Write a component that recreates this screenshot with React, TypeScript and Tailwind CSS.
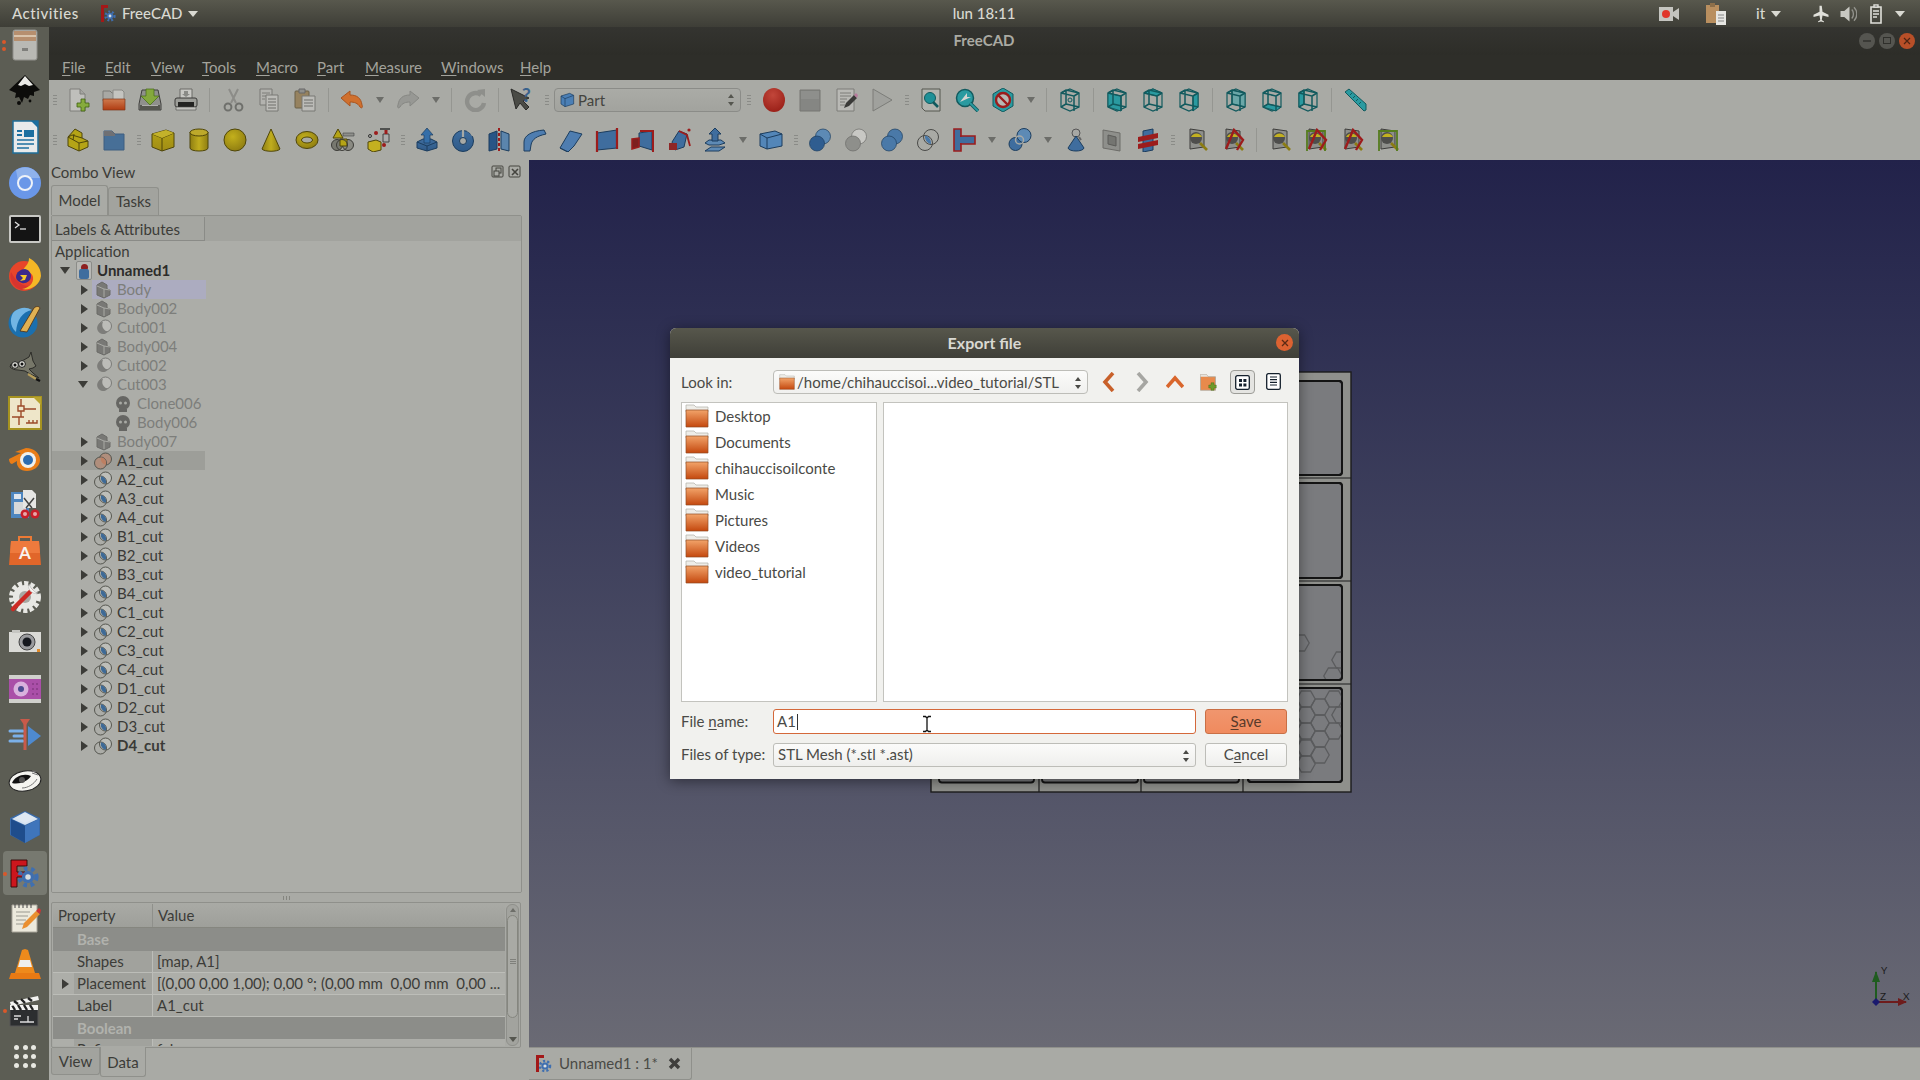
import React from 'react';

type P = { children?: React.ReactNode; s?: number };
const I = ({ children, s = 24 }: P) => (
  <svg width={s} height={s} viewBox="0 0 24 24" className="block shrink-0">{children}</svg>
);
const Gear = ({ x, y, r, c = '#3f6fb0' }: { x: number; y: number; r: number; c?: string }) => (
  <g>
    <circle cx={x} cy={y} r={r} fill="none" stroke={c} strokeWidth={r * 0.5} strokeDasharray={`${r * 0.42} ${r * 0.42}`} />
    <circle cx={x} cy={y} r={r * 0.72} fill={c} />
    <circle cx={x} cy={y} r={r * 0.32} fill="#d8dde0" />
  </g>
);
const G = 'url(#gold)', GD = '#4f460a', B1 = 'url(#blue)', BD = '#1c3d5e', T = '#2a9aa0', TD = '#125a5e', R = '#9c1c1c';

const Defs = () => (
  <svg width="0" height="0" className="absolute">
    <defs>
      <linearGradient id="gold" x1="0" y1="0" x2="0" y2="1">
        <stop offset="0" stopColor="#b5a416" />
        <stop offset="1" stopColor="#a08c14" />
      </linearGradient>
      <radialGradient id="goldr" cx=".4" cy=".35" r=".75">
        <stop offset="0" stopColor="#c3b01c" />
        <stop offset="1" stopColor="#8a7810" />
      </radialGradient>
      <linearGradient id="goldh" x1="0" y1="0" x2="1" y2="0">
        <stop offset="0" stopColor="#8f7e12" />
        <stop offset=".5" stopColor="#c0ad1e" />
        <stop offset="1" stopColor="#8f7e12" />
      </linearGradient>
      <linearGradient id="blue" x1="0" y1="0" x2="0" y2="1">
        <stop offset="0" stopColor="#3f6d9e" />
        <stop offset="1" stopColor="#2f5a88" />
      </linearGradient>
      <radialGradient id="recg" cx=".45" cy=".3" r=".75">
        <stop offset="0" stopColor="#c2463a" />
        <stop offset="1" stopColor="#981e16" />
      </radialGradient>
      <linearGradient id="openg" x1="0" y1="0" x2="0" y2="1">
        <stop offset="0" stopColor="#cf7a4e" />
        <stop offset="1" stopColor="#b03c12" />
      </linearGradient>
    </defs>
  </svg>
);

const TI: Record<string, React.ReactNode> = {
  new: <><path d="M4 1h10l5 5v17H4z" fill="#bfbfbb" stroke="#7e7e7a" /><path d="M14 1v5h5" fill="#a5a5a1" stroke="#7e7e7a" /><path d="M15 11v4h-4v4h4v4h4v-4h4v-4h-4v-4z" fill="#86ab3c" stroke="#3f6212" strokeWidth=".8" /></>,
  open: <><path d="M1 3h7l2 2h2v8H1z" fill="#a8a8a4" stroke="#7b7b77" /><path d="M11 2h9l2 2v9H11z" fill="#c4c4c0" stroke="#8a8a86" /><path d="M1 11h22v11H1z" fill="url(#openg)" stroke="#80361a" strokeWidth=".7" /></>,
  save: <><path d="M4 2h16l3 14v6H1v-6z" fill="#8f908c" stroke="#3e3e3c" /><path d="M2 17h20v5H2z" fill="#55564f" /><path d="M4 17h16v1H4z" fill="#adaea9" /><path d="M8 1h8v7h5l-9 9-9-9h5z" fill="#84a83c" stroke="#426c16" strokeWidth=".7" /></>,
  print: <><path d="M6 1h12v10H6z" fill="#c8c8c4" stroke="#6a6a66" /><path d="M10 3h4v3h2l-4 3-4-3h2z" fill="#8a8b87" /><rect x="1" y="10" width="22" height="9" rx="2" fill="#9c9d98" stroke="#3a3a38" /><path d="M4 14h16v5H4z" fill="#232321" /><path d="M2 19h20v3H2z" fill="#c2c2be" stroke="#4a4a48" strokeWidth=".6" /></>,
  cut: <><path d="M8 1l7 14M17 1l-7 14" stroke="#8c8c88" strokeWidth="2" fill="none" /><ellipse cx="7" cy="19" rx="3.400" ry="3.600" fill="none" stroke="#6f706c" strokeWidth="2" /><ellipse cx="18" cy="19" rx="3.400" ry="3.600" fill="none" stroke="#6f706c" strokeWidth="2" /></>,
  copy: <><path d="M3 1h12v16H3z" fill="#b3b3af" stroke="#797975" /><path d="M5 5h8M5 8h8M5 11h3" stroke="#7c7c78" /><path d="M9 7h12v16H9z" fill="#bcbcb8" stroke="#797975" /><path d="M11 11h8M11 14h8M11 17h8M11 20h8" stroke="#6e6e6a" /></>,
  paste: <><rect x="2" y="3" width="14" height="17" rx="1" fill="#96825f" stroke="#6b6048" /><path d="M6 1h6v4H6z" fill="#8f8f8b" stroke="#666" /><path d="M9 8h13v15H9z" fill="#bcbcb8" stroke="#797975" /><path d="M11 12h9M11 15h9M11 18h9" stroke="#6e6e6a" /></>,
  undo: <path d="M10 3L1 10l9 8v-4c4 0 8 1 10 5 2 2 3 0 2-2-1-7-5-10-12-10z" fill="#d0702e" stroke="#a85420" strokeLinejoin="round" />,
  redo: <path d="M14 3l9 7-9 8v-4c-4 0-8 1-10 5-2 2-3 0-2-2 1-7 5-10 12-10z" fill="#979894" stroke="#868783" strokeLinejoin="round" />,
  refresh: <><path d="M18 7a8.500 8.500 0 1 0 3 8" fill="none" stroke="#8e8f8b" strokeWidth="4.400" /><path d="M14 2l8-1v8z" fill="#8e8f8b" /></>,
  what: <><path d="M1 1l5 20 4-6 6 7 3-3-6-6 6-3z" fill="#4a4b46" stroke="#2a2a28" /><text x="12" y="14" fontSize="19" fill="#39618c" fontWeight="700" fontFamily="Lato">?</text></>,
  rec: <ellipse cx="12" cy="12" rx="11" ry="12" fill="url(#recg)" />,
  stop: <><path d="M2 2h20v21H2z" fill="#858683" stroke="#767773" /><path d="M3 3h18v8H3z" fill="#8e8f8c" /></>,
  macro: <><path d="M3 1h17v22H3z" fill="#b9b9b5" stroke="#7d7d79" /><path d="M6 5h11M6 8h11M6 11h7M6 14h5M6 17h5" stroke="#7d7d79" /><path d="M10 20l2-5 8-8 3 3-8 8z" fill="#3a3a38" /><path d="M20 7l3 3 1-3-2-2z" fill="#b57a9b" /></>,
  play: <path d="M3 1l19 11L3 23z" fill="#a0a19d" stroke="#7c7d79" />,
  fitall: <><path d="M3 1h18v22H6l-3-3z" fill="#b3b4af" stroke="#55564f" /><circle cx="11" cy="10" r="5.500" fill="#1f9097" stroke="#125a5e" /><path d="M14 14l5 5" stroke="#125a5e" strokeWidth="2.600" /></>,
  fitsel: <><circle cx="10" cy="10" r="8.500" fill="#2a9aa0" stroke="#125a5e" strokeWidth="1.500" /><path d="M5 14l7-9v4l4 0z" fill="#d4d4d0" /><path d="M15 15l8 8" stroke="#125a5e" strokeWidth="3.600" /><path d="M15 15l8 8" stroke="#2a9aa0" strokeWidth="1.800" /></>,
  style: <><path d="M12 0l10 6v12l-10 6-10-6V6z" fill="#2a9aa0" stroke="#125a5e" /><circle cx="12" cy="12" r="7" fill="#b8b8b4" stroke={R} strokeWidth="2.400" /><path d="M7 7l10 10" stroke={R} strokeWidth="2.400" /></>,
};
const cube = (kind: string) => (
  <>
    <path d="M12 1l9 4v14l-9 4-9-4V5z" fill="#a9aaa5" stroke={TD} strokeWidth="1.200" />
    {kind === 'front' && <path d="M3 5l13 3v15l-13-4z" fill={T} stroke={TD} />}
    {kind === 'top' && <path d="M3 5l9-4 9 4-5 3z" fill={T} stroke={TD} />}
    {kind === 'right' && <path d="M16 8l5-3v14l-5 4z" fill={T} stroke={TD} />}
    {kind === 'rear' && <path d="M8 2l13 3v14l-13-3z" fill="#6aa7a8" stroke={TD} />}
    {kind === 'bottom' && <path d="M3 19l5-3 13 3-5 4z" fill={T} stroke={TD} />}
    {kind === 'left' && <path d="M3 5l5-3v14l-5 3z" fill={T} stroke={TD} />}
    <path d="M3 5l13 3v15M16 8l5-3M8 2v14l-5 3M8 16l13 3M3 5l5-3 13 3" fill="none" stroke={TD} strokeWidth="1.500" />
    {kind === 'iso' && <circle cx="12" cy="12" r="2" fill="none" stroke={TD} />}
  </>
);
const Cube = ({ k }: { k: string }) => <I>{cube(k)}</I>;
const Circles = ({ a, b, st = BD }: { a: string; b: string; st?: string }) => (
  <>
    <circle cx="15" cy="8.500" r="7.500" fill={b} stroke={st} strokeWidth=".7" />
    <circle cx="9" cy="15.500" r="7.500" fill={a} stroke={st} strokeWidth=".7" />
  </>
);
const Meas = ({ frame, v }: { frame?: boolean; v?: boolean }) => (
  <I>
    <path d="M5 1l14 2v16L5 21z" fill="#8e8f8b" stroke="#3d3d3b" />
    <circle cx="11" cy="10" r="6" fill="#4e4e4c" />
    <path d="M6 9a6 6 0 0 1 11 0z" fill="#c2b020" />
    <path d="M15 15l7 7" stroke="#8b7c12" strokeWidth="2.600" />
    {frame && <path d="M3 23V3h18v20" fill="none" stroke="#557c1e" strokeWidth="1.800" />}
    {v && <path d="M5 21L13 2l9 10-6 10" fill="none" stroke={R} strokeWidth="2.400" />}
  </I>
);

const T2: Record<string, React.ReactNode> = {
  pd: <><path d="M9 1l7 4v5l6 3v6l-9 4-11-5V9z" fill="#b5a416" stroke={GD} /><path d="M2 9l4-2 10 3M2 9l11 6 9-2M13 15v8M8 6l-1 6" fill="none" stroke={GD} /></>,
  fold: <><path d="M2 3h8l3 3h9v16H2z" fill="#476f97" stroke="#3f5f80" /><path d="M2 3h8l3 3 0 2H2z" fill="#6f7074" /></>,
  box: <><path d="M1 6l14-4 8 3v14l-12 4-10-4z" fill={G} stroke={GD} /><path d="M1 6l10 4 12-5M11 10v13" fill="none" stroke={GD} /><path d="M1 6l14-4 8 3-12 5z" fill="#c3b22a" /></>,
  cyl: <><path d="M3 4v16c0 4 18 4 18 0V4z" fill="url(#goldh)" stroke={GD} /><ellipse cx="12" cy="4.500" rx="9" ry="3.500" fill="#bda92a" stroke={GD} /></>,
  sph: <circle cx="12" cy="12" r="11" fill="url(#goldr)" stroke={GD} />,
  cone: <path d="M12 1L3 21c2 3 16 3 18 0z" fill="url(#goldh)" stroke={GD} />,
  tor: <><ellipse cx="12" cy="12" rx="11" ry="8.500" fill="url(#goldr)" stroke={GD} /><ellipse cx="12" cy="12" rx="5.500" ry="3" fill="#a9aaa5" stroke={GD} /></>,
  prim: <><path d="M7 1l5 9H2z" fill="#b5a416" stroke={GD} /><path d="M12 5h11v3H12z" fill="#8e8f8b" stroke="#444" strokeWidth=".6" /><circle cx="6" cy="17" r="5.500" fill="#77786f" stroke="#3c3c38" /><circle cx="17" cy="17" r="5.500" fill="#8a8a82" stroke="#3c3c38" /><path d="M9 11h7v7H9z" fill="#b5a416" stroke={GD} /><circle cx="11" cy="17" r="5.500" fill="none" stroke="#3c3c38" /></>,
  build: <><path d="M1 14l8-2 5 2v8l-8 2-5-3z" fill="#c4b020" stroke={GD} /><path d="M16 6h6v8h-6z" fill="#aaa" stroke="#444" /><path d="M13 1h10" stroke="#333" strokeWidth="1.500" /><path d="M19 2v4" stroke={R} strokeWidth="3" /><circle cx="9" cy="5" r="2" fill={R} /><circle cx="3" cy="8" r="1.500" fill="none" stroke="#333" /><circle cx="17" cy="17" r="2" fill={R} /></>,
  ext: <><path d="M2 14l6-3h8l6 3v6l-10 3-10-3z" fill={B1} stroke={BD} /><path d="M2 14l10 4 10-4M12 18v5" fill="none" stroke={BD} /><path d="M12 0l6 7h-3v8H9V7H6z" fill="#346ea8" stroke={BD} strokeWidth=".7" /></>,
  rev: <><circle cx="12" cy="13" r="10.500" fill={B1} stroke={BD} /><circle cx="12" cy="13" r="3.500" fill="#a9aaa5" stroke={BD} /><path d="M12 2v7M16 2a10 10 0 0 1 6 6" fill="none" stroke="#a9aaa5" strokeWidth="2.200" /></>,
  mir: <><path d="M2 6l8-3v18l-8 2z" fill="#285586" stroke={BD} /><path d="M14 3l8 3v17l-8-2z" fill="#5b85ad" stroke={BD} /><path d="M12 0v24" stroke={R} strokeWidth="2" strokeDasharray="3 2" /></>,
  fil: <path d="M1 23V14C1 8 8 3 21 2l2 4C14 8 9 11 8 17l-1 6z" fill="#4e7db0" stroke={BD} />,
  cham: <><path d="M1 20L11 3l12 3-8 12-6 6z" fill="#4e7db0" stroke={BD} /><path d="M1 20l8 4" stroke={BD} /></>,
  ruled: <><path d="M2 5l20-3v18L2 22z" fill="#3f6d9e" stroke={BD} /><path d="M2 3v21M22 0v21" stroke={R} strokeWidth="2.200" /></>,
  loft: <><path d="M8 5l13-2v19l-13-4z" fill="#3f6d9e" stroke={BD} /><path d="M9 3h13v21" fill="none" stroke={R} strokeWidth="2" /><path d="M1 11l7-1v9l-7 2z" fill="#7c2020" stroke={R} strokeWidth="1.500" /></>,
  sweep: <><path d="M5 14L12 3l8 3-3 13-9 3z" fill="#3f6d9e" stroke={BD} /><path d="M2 15h8v7H2z" fill="#8e2626" /><circle cx="22" cy="2" r="1.600" fill={R} /><path d="M12 3l8 4 3 11" fill="none" stroke={R} strokeWidth="1.800" /></>,
  off: <><path d="M2 23l6-4h14l-6 4z" fill="#5e8ab5" stroke={BD} /><path d="M2 15l4-3h12l4 3-6 2H6z" fill="#5e8ab5" stroke={BD} /><path d="M12 0l6 6h-3v7H9V6H6z" fill="#3f6d9e" stroke={BD} /></>,
  thick: <><path d="M1 6l15-3 7 3v12l-15 3-7-3z" fill="#5386b8" stroke={BD} /><path d="M1 6l7 4 15-4M8 10v11" fill="none" stroke={BD} /></>,
  bool: <Circles a="#2f5d90" b="#5d8ab5" />,
  bcut: <Circles a="#8e8f8b" b="#c8c8c4" st="#6b6b68" />,
  fuse: <Circles a="#4a79a8" b="#4a79a8" />,
  com: <><circle cx="15" cy="9" r="7.500" fill="none" stroke="#4a4a48" /><circle cx="9" cy="15" r="7.500" fill="none" stroke="#4a4a48" /><path d="M9 7.600a7.500 7.500 0 0 1 6 8.600 7.500 7.500 0 0 1-6-8.600z" fill="#4a79a8" /></>,
  join: <><path d="M2 1h7v22H2z" fill="#3f6d9e" stroke={R} strokeWidth="1.600" /><path d="M9 8h14v8H9z" fill="#3f6d9e" stroke={R} strokeWidth="1.600" /><path d="M8 9h2v6H8z" fill="#3f6d9e" /></>,
  split: <><circle cx="7.500" cy="16" r="6.500" fill="#3f6d9e" stroke={BD} /><circle cx="16" cy="7.500" r="7" fill="#5d8ab5" stroke={BD} /><circle cx="11.500" cy="12" r="4" fill="none" stroke="#a9aaa5" strokeWidth="1.500" /></>,
  comp: <><circle cx="12" cy="5" r="4" fill="#a8a8a4" stroke="#555" /><path d="M12 8l-8 12c1 4 15 4 16 0z" fill="#3f6d9e" stroke={BD} /><path d="M15 9l2 3" stroke="#666" strokeWidth="2" /></>,
  shape: <><path d="M3 2l17 3v18L3 20z" fill="#8e8f8b" stroke="#6c6c68" /><path d="M8 7l8 2v9l-8-2z" fill="#747571" stroke="#5b5b58" /></>,
  xor: <><path d="M7 3l10-2v21l-10 2z" fill="#3f6d9e" stroke={BD} /><path d="M2 9l20-4v5L2 14zM2 16l20-4v5L2 21z" fill={R} /></>,
  m1: <Meas />,
  m2: <Meas v />,
  m3: <Meas />,
  m4: <Meas frame v />,
  m5: <Meas v />,
  m6: <Meas frame />,
};

const Btn = ({ n, c }: { n?: string; c?: React.ReactNode }) => (
  <div className="w-[36px] h-[28px] shrink-0 flex items-center justify-center">
    {c ?? <I>{(n && TI[n]) || (n && T2[n])}</I>}
  </div>
);
const Dd = () => (
  <div className="w-[20px] h-[28px] shrink-0 flex items-center justify-center">
    <div className="w-0 h-0 border-l-[4px] border-r-[4px] border-t-[6px] border-l-transparent border-r-transparent border-t-[#6c6d69]" />
  </div>
);
const Handle = ({ w }: { w: string }) => (
  <div className={`${w} h-[28px] shrink-0 flex flex-col items-center justify-center gap-[2px]`}>
    <div className="w-[4px] h-px bg-[#8a8b87]" />
    <div className="w-[4px] h-px bg-[#8a8b87]" />
    <div className="w-[4px] h-px bg-[#8a8b87]" />
    <div className="w-[4px] h-px bg-[#8a8b87]" />
  </div>
);
const Sep = () => (
  <div className="w-[11px] h-[28px] shrink-0 flex items-center justify-center">
    <div className="w-px h-[24px] bg-[#959691]" />
  </div>
);

const Caret = () => (
  <div className="w-0 h-0 border-l-[5px] border-r-[5px] border-t-[6px] border-l-transparent border-r-transparent border-t-[#d9d9d2]" />
);

const TopBar = () => (
  <div className="h-[27px] shrink-0 bg-linear-to-b from-[#58584d] to-[#3e3e37] relative flex items-center text-[#d9d9d2] text-[15px] font-medium">
    <span className="ml-[12px] w-[86px] tracking-[0.55px]">Activities</span>
    <svg width="16" height="20" viewBox="0 0 16 20" className="ml-[2px]">
      <path d="M1 1h7v3H4v14H1z" fill="#a31818" />
      <Gear x={10} y={12} r={4.500} />
    </svg>
    <span className="ml-[6px]">FreeCAD</span>
    <div className="ml-[5px]"><Caret /></div>
    <div className="flex-1" />
    <div className="flex items-center pr-[15px]">
      <svg width="20" height="16" viewBox="0 0 20 16"><path d="M0 1h14v14H0z" fill="#c5c5c0" /><circle cx="7" cy="8" r="4" fill="#e0362a" /><path d="M14 6l6-4v12l-6-4z" fill="#c5c5c0" /></svg>
      <svg width="22" height="24" viewBox="0 0 22 24" className="ml-[26px]"><path d="M1 3h13v18H1z" fill="#b98f5f" /><path d="M5 1h5v4H5z" fill="#8d6f4a" /><path d="M11 9h10v14H11z" fill="#e6e6e2" /><path d="M13 13h6M13 16h6M13 19h6" stroke="#888" /></svg>
      <span className="ml-[29px] w-[15px]">it</span>
      <Caret />
      <svg width="18" height="18" viewBox="0 0 24 24" className="ml-[31px]"><path d="M10 1h3l1 8 8 4v3l-8-2-1 6 3 2v1l-4-1-4 1v-1l3-2-1-6-8 2v-3l8-4z" fill="#e0e0da" /></svg>
      <svg width="18" height="18" viewBox="0 0 24 24" className="ml-[9px]"><path d="M2 8h5l7-6v20l-7-6H2z" fill="#c8c8c2" /><path d="M17 6c3 3 3 9 0 12M20 3c5 5 5 13 0 18" fill="none" stroke="#93938d" strokeWidth="1.800" /></svg>
      <svg width="16" height="20" viewBox="0 0 16 20" className="ml-[12px]"><path d="M2 3h10v16H2z" fill="none" stroke="#e0e0da" strokeWidth="1.600" /><path d="M5 1h4v2H5zM4 7h6M4 10h6M4 13h4" stroke="#e0e0da" strokeWidth="1.400" /></svg>
      <div className="ml-[10px]"><Caret /></div>
    </div>
    <span className="absolute left-[948px] w-[72px] text-center">lun 18:11</span>
  </div>
);

const DockSvg = ({ children }: P) => (
  <div className="h-[46px] w-[49px] flex items-center justify-center shrink-0">
    <svg width="34" height="34" viewBox="0 0 34 34">{children}</svg>
  </div>
);
const dockIcons: React.ReactNode[] = [
  <><rect x="5" y="2" width="24" height="30" rx="2" fill="#b9b9b4" stroke="#8f8f8a" /><path d="M6 3h22v10H6z" fill="#b68f6f" /><path d="M6 7h22v2H6z" fill="#d9c4ac" /><path d="M14 20h6v3h-6z" fill="#7f7f7b" /></>,
  <><path d="M17 1l15 15-6 2v4l-4-1-2 4-4-2-2 6-3-6-4 1 1-5-7-3z" fill="#0c0c0a" /><path d="M17 2l8 9-4 1-4-2-4 2-3-1z" fill="#eaeae6" /><circle cx="11" cy="29" r="2" fill="#0c0c0a" /><circle cx="22" cy="27" r="1.400" fill="#0c0c0a" /></>,
  <><path d="M5 1h25v32H5z" fill="#e8eaeb" stroke="#1f6d98" strokeWidth="1.500" /><path d="M23 1h7v7z" fill="#1c6fa0" /><path d="M9 10h5v2H9zM9 14h5v2H9z" fill="#1c6fa0" /><path d="M16 10h10v7H16z" fill="#1c6fa0" /><path d="M9 20h17M9 24h17M9 28h12" stroke="#1c6fa0" strokeWidth="1.700" /></>,
  <><circle cx="17" cy="17" r="16" fill="#6a97e8" /><path d="M8 4a16 16 0 0 1 24 8H17a7 7 0 0 0-7 3z" fill="#8fb2ec" /><circle cx="17" cy="17" r="7" fill="#6a97e8" stroke="#eef2f8" strokeWidth="2" /></>,
  <><rect x="2" y="4" width="30" height="26" rx="1" fill="#141414" stroke="#c8c8c4" strokeWidth="2" /><path d="M7 10l4 3-4 3" fill="none" stroke="#ddd" strokeWidth="1.300" /><path d="M12 17h6" stroke="#ddd" strokeWidth="1.300" /></>,
  <><circle cx="16" cy="18" r="15" fill="#e8452a" /><path d="M3 14a14 14 0 0 0 13 18c6 0 11-3 14-8-5 5-18 8-27-10z" fill="#d8342f" /><path d="M21 0c6 3 12 9 12 18-1 9-11 15-19 13 7-1 12-6 11-12-1-5-7-6-10-4 0-7 6-7 6-15z" fill="#f5b726" /><path d="M8 19c0-5 5-8 9-8 4 1 6 4 6 7 0 5-5 8-9 7-3-1-6-3-6-6z" fill="#3b2a8c" /><path d="M12 17h7l-2 5-5 1 3-3z" fill="#f6c92b" /></>,
  <><circle cx="15" cy="19" r="14.500" fill="#1b6fae" /><path d="M5 9a15 15 0 0 1 19-3C14 8 9 16 8 28 3 24 1 16 5 9z" fill="#72b5e4" /><path d="M12 27L26 4c2-2 5-2 6 0l-13 24z" fill="#e0b052" stroke="#4c2f12" strokeWidth=".8" /></>,
  <><path d="M9 13l5-2 7-4 2-5 2 9 3 5-3 2-4 1 4 4 6 5-9-4-5-3-7-1c-3 0-6-1-8-3l1-3z" fill="#777769" stroke="#2c2c28" strokeWidth="1" /><circle cx="7" cy="15" r="3.400" fill="#dcdcd6" stroke="#1c1c1a" /><circle cx="14" cy="14" r="3.400" fill="#dcdcd6" stroke="#1c1c1a" /><circle cx="7" cy="15" r="1.500" fill="#111" /><circle cx="14" cy="14" r="1.500" fill="#111" /><path d="M20 24l8 5" stroke="#b59c5a" strokeWidth="2.200" /><path d="M28 29l4 2" stroke="#111" strokeWidth="2.400" /></>,
  <><path d="M1 1h32v32H1z" fill="#eee6c9" stroke="#a69320" strokeWidth="2" /><path d="M25 1h8v8z" fill="#b8a42e" /><path d="M7 21h9M13 3v7M13 15v6M10 10h6v5h-6zM16 13h12M11 21v8M4 21h4M18 27h11v-3M21 24v3M25 24v3" fill="none" stroke="#9c4a28" strokeWidth="1.400" /></>,
  <><path d="M1 17l12-6-6-1 11-4c8 0 14 5 14 12 0 7-7 11-13 11-7 0-11-5-10-10l-5 3c-2 0-3-3-3-5z" fill="#ea7d16" /><circle cx="20" cy="18" r="8" fill="#f0f0ec" /><circle cx="20" cy="18" r="5" fill="#2c6cb0" /></>,
  <><path d="M3 4h18v26H3z" fill="#4e86bf" /><path d="M6 6h7v5H6z" fill="#dfe6ee" /><path d="M6 14h12v12H6z" fill="#d6d8da" /><path d="M15 2h9l4 4v14H15z" fill="#e6e6e4" /><path d="M16 10l8 10M26 10l-8 10" stroke="#444" strokeWidth="1.500" /><circle cx="17" cy="26" r="4.500" fill="#c81f2a" /><circle cx="27" cy="26" r="4.500" fill="#c81f2a" /><circle cx="17" cy="26" r="2" fill="#e9a7a8" /><circle cx="27" cy="26" r="2" fill="#e9a7a8" /></>,
  <><path d="M11 7V3h12v4" fill="none" stroke="#ed7a35" strokeWidth="2" /><path d="M3 7h28l2 24H1z" fill="#e1662a" /><path d="M3 7h28l1 12H2z" fill="#ee7a3d" /><text x="17" y="25" textAnchor="middle" fontSize="17" fontWeight="700" fill="#f8f4ee" fontFamily="Lato">A</text></>,
  <><circle cx="17" cy="17" r="13" fill="none" stroke="#e8e8e4" strokeWidth="6" strokeDasharray="4 2" /><circle cx="17" cy="17" r="12" fill="#e8e8e4" /><circle cx="17" cy="17" r="6" fill="#a8a8a2" /><path d="M5 29L23 11" stroke="#cc2a24" strokeWidth="4.500" strokeLinecap="round" /><path d="M21 4a7 7 0 0 0 9 9l-3-1-4-4z" fill="#f4f4f0" stroke="#aaa" strokeWidth=".5" /></>,
  <><path d="M1 6h32v20H1z" fill="#dadad6" /><path d="M4 4h8v3H4z" fill="#c6c6c2" /><circle cx="19" cy="16" r="8" fill="#9a9b9e" stroke="#444" /><circle cx="19" cy="16" r="4.500" fill="#15181e" /><path d="M29 23h3v3h-3z" fill="#e08a2a" /></>,
  <><path d="M1 3h32v28H1z" fill="#aa4fa8" /><path d="M1 3h32v4H1zM1 27h32v4H1z" fill="#d0d0cc" /><circle cx="13" cy="17" r="7.500" fill="#d9b1dd" /><circle cx="13" cy="17" r="3" fill="#4b4b90" /><path d="M24 11h2v2h-2zM28 11h2v2h-2zM24 16h2v2h-2zM28 16h2v2h-2zM24 21h2v2h-2zM28 21h2v2h-2z" fill="#8f3f8e" /></>,
  <><path d="M2 13h13M6 18h9M2 23h13" stroke="#7bb0e8" strokeWidth="3" strokeLinecap="round" /><path d="M17 5v27" stroke="#c85a4a" strokeWidth="3" /><path d="M12 1h10l-4 6h-2z" fill="#c85a4a" /><path d="M20 8l13 10-13 10z" fill="#4e8ad0" /></>,
  <><ellipse cx="17" cy="17" rx="16" ry="10" fill="#f4f4f0" stroke="#222" transform="rotate(-10 17 17)" /><path d="M4 19c3-7 12-10 19-7-3 5-12 9-19 7z" fill="#111" /><circle cx="14" cy="16" r="3" fill="#555" /><path d="M14 24c6 0 12-4 15-9M24 9l6 2M24 7l4 1" fill="none" stroke="#777" /></>,
  <><path d="M17 1l15 7v17l-15 8-15-8V8z" fill="#3a6aa8" /><path d="M17 2l13 7-13 6-13-6z" fill="#d6e3f2" /><path d="M7 8l10-5 10 5-10 5z" fill="#dfe8f3" /><path d="M3 9l14 7v17L3 25z" fill="#1f4d8c" /><path d="M17 16l14-7v16l-14 8z" fill="#3f75bb" /></>,
  null,
  <><path d="M4 3h25v27H4z" fill="#ece9dc" stroke="#a8a59a" /><path d="M7 2v4M11 2v4M15 2v4M19 2v4M23 2v4" stroke="#444" /><path d="M8 10h14M8 14h12M8 18h10M8 22h8" stroke="#9a9990" /><path d="M14 27l2-6 12-12 4 3-13 13z" fill="#ea8f2f" /><path d="M28 9l3-3 2 2-1 4z" fill="#c33" /></>,
  <><path d="M17 1l3 1 7 23H7l7-23z" fill="#ee8a1c" /><path d="M12 12h10l2 7H10z" fill="#eee" /><path d="M3 25h28l2 6H1z" fill="#e87a14" /></>,
  <><path d="M2 15h28v17H2z" fill="#2c2e30" stroke="#555" /><path d="M2 11h28v5H2z" fill="#f2f2f0" /><path d="M4 11l3 5M10 11l3 5M16 11l3 5M22 11l3 5" stroke="#222" strokeWidth="2.400" /><path d="M2 8l28-6 1 4-28 6z" fill="#f2f2f0" /><path d="M6 7l4 3M13 5l4 4M20 4l4 3" stroke="#222" strokeWidth="2.400" /><path d="M6 22h7M6 25h4M12 28h14M20 22v6" stroke="#ddd" strokeWidth="1.300" /></>,
];

const FreeCadLogo = () => (
  <svg width="34" height="36" viewBox="0 0 34 36">
    <path d="M3 5h16v6H9v6h8v5H9v10H3z" fill="#cc161d" stroke="#300808" strokeWidth=".9" />
    <Gear x={20} y={22} r={8.500} />
  </svg>
);

const Dock = () => (
  <div className="w-[49px] shrink-0 bg-[#5c5d54] flex flex-col relative">
    <div className="-mt-[5px]" />
    {dockIcons.map((ic, i) =>
      ic === null ? (
        <div key={i} className="h-[46px] w-[49px] flex items-center justify-center shrink-0 relative">
          <div className="w-[44px] h-[44px] rounded-[4px] bg-[#777970] flex items-center justify-center">
            <FreeCadLogo />
          </div>
          <div className="absolute left-[3px] top-[22px] w-[4px] h-[4px] rounded-full bg-[#d9582a]" />
        </div>
      ) : (
        <div key={i} className="relative">
          <DockSvg>{ic}</DockSvg>
          {i === 0 && (
            <>
              <div className="absolute left-[2px] top-[18px] w-[4px] h-[4px] rounded-full bg-[#d9582a]" />
              <div className="absolute left-[2px] top-[25px] w-[4px] h-[4px] rounded-full bg-[#d9582a]" />
            </>
          )}
          {i === 21 && <div className="absolute left-[3px] top-[21px] w-[4px] h-[4px] rounded-full bg-[#d9582a]" />}
        </div>
      ),
    )}
    <div className="h-[46px] w-[49px] grid grid-cols-3 gap-x-[5px] gap-y-[4px] px-[14px] pt-[11px] content-start">
      {[0, 1, 2, 3, 4, 5, 6, 7, 8].map((k) => (
        <div key={k} className="w-[5px] h-[5px] rounded-full bg-[#e8e8e2]" />
      ))}
    </div>
  </div>
);

const menus: [string, string, string][] = [
  ['F', 'ile', 'w-[43px]'],
  ['E', 'dit', 'w-[46px]'],
  ['V', 'iew', 'w-[51px]'],
  ['T', 'ools', 'w-[54px]'],
  ['M', 'acro', 'w-[61px]'],
  ['P', 'art', 'w-[48px]'],
  ['M', 'easure', 'w-[76px]'],
  ['W', 'indows', 'w-[79px]'],
  ['H', 'elp', 'w-[50px]'],
];

const Toolbars = () => (
  <div className="h-[80px] shrink-0 bg-[#a9aaa5] flex flex-col">
    <div className="flex items-center h-[40px]">
      <Handle w="w-[11px]" />
      <Btn n="new" /><Btn n="open" /><Btn n="save" /><Btn n="print" />
      <Sep />
      <Btn n="cut" /><Btn n="copy" /><Btn n="paste" />
      <Sep />
      <Btn n="undo" /><Dd /><Btn n="redo" /><Dd />
      <Sep />
      <Btn n="refresh" />
      <Sep />
      <Btn n="what" />
      <Handle w="w-[14px]" />
      <div className="w-[187px] h-[24px] shrink-0 rounded-[4px] border border-[#8b8c88] bg-linear-to-b from-[#aaaba6] to-[#a2a39e] flex items-center pl-[4px] text-[15px] text-[#44443f] relative">
        <svg width="16" height="16" viewBox="0 0 24 24"><path d="M3 6l13-4 6 3v13l-13 4-6-4z" fill="#4b7fb5" stroke={BD} /><path d="M3 6l6 4 13-5M9 10v12" fill="none" stroke={BD} /></svg>
        <span className="ml-[3px]">Part</span>
        <svg width="8" height="16" viewBox="0 0 8 16" className="absolute right-[5px] top-[3px]"><path d="M1 6l3-4 3 4zM1 10l3 4 3-4z" fill="#55564f" /></svg>
      </div>
      <Handle w="w-[15px]" />
      <Btn n="rec" /><Btn n="stop" /><Btn n="macro" /><Btn n="play" />
      <Handle w="w-[13px]" />
      <Btn n="fitall" /><Btn n="fitsel" /><Btn n="style" /><Dd />
      <Sep />
      <Btn c={<Cube k="iso" />} />
      <Sep />
      <Btn c={<Cube k="front" />} /><Btn c={<Cube k="top" />} /><Btn c={<Cube k="right" />} />
      <Sep />
      <Btn c={<Cube k="rear" />} /><Btn c={<Cube k="bottom" />} /><Btn c={<Cube k="left" />} />
      <Sep />
      <Btn c={<I><path d="M2 4l4-3 17 15v6l-2 1z" fill={T} stroke={TD} /><path d="M7 7l2-2M10 10l2-2M13 13l2-2M16 16l2-2" stroke={TD} /></I>} />
    </div>
    <div className="flex items-center h-[40px]">
      <Handle w="w-[11px]" />
      <Btn n="pd" /><Btn n="fold" />
      <Handle w="w-[13px]" />
      <Btn n="box" /><Btn n="cyl" /><Btn n="sph" /><Btn n="cone" /><Btn n="tor" /><Btn n="prim" /><Btn n="build" />
      <Handle w="w-[12px]" />
      <Btn n="ext" /><Btn n="rev" /><Btn n="mir" /><Btn n="fil" /><Btn n="cham" /><Btn n="ruled" /><Btn n="loft" /><Btn n="sweep" /><Btn n="off" /><Dd /><Btn n="thick" />
      <Handle w="w-[13px]" />
      <Btn n="bool" /><Btn n="bcut" /><Btn n="fuse" /><Btn n="com" /><Btn n="join" /><Dd /><Btn n="split" /><Dd /><Btn n="comp" /><Btn n="shape" /><Btn n="xor" />
      <Handle w="w-[13px]" />
      <Btn n="m1" /><Btn n="m2" />
      <Sep />
      <Btn n="m3" /><Btn n="m4" /><Btn n="m5" /><Btn n="m6" />
    </div>
  </div>
);

const BodyIc = () => (
  <svg width="18" height="18" viewBox="0 0 18 18"><path d="M8 1l5 3v4l3 1v5l-6 3-7-3V4z" fill="#787875" stroke="#6a6a67" /><path d="M3 5l7 3v8M10 8l6 1" fill="none" stroke="#a9aaa5" /></svg>
);
const CutIc = () => (
  <svg width="18" height="18" viewBox="0 0 18 18"><circle cx="11.500" cy="7" r="6" fill="#bcbcb8" stroke="#7a7a77" /><path d="M9 3a6 6 0 1 0 5 9.500 6.500 6.500 0 0 1-5-9.500z" fill="#7d7d7a" /></svg>
);
const CloneIc = () => (
  <svg width="18" height="18" viewBox="0 0 18 18"><circle cx="9" cy="8" r="7" fill="#666663" /><circle cx="6.500" cy="8" r="1.500" fill="#a9aaa5" /><circle cx="11.500" cy="8" r="1.500" fill="#a9aaa5" /><path d="M5 14h8v3H5z" fill="#666663" /></svg>
);
const BoolIc = ({ sel }: { sel?: boolean }) => (
  <svg width="18" height="18" viewBox="0 0 18 18">
    <circle cx="11.500" cy="7" r="6" fill={sel ? '#b08e7c' : '#bdbeb9'} stroke="#55564f" />
    <circle cx="6.500" cy="11" r="6" fill={sel ? '#b08e7c' : 'none'} stroke="#55564f" />
    <path d="M7 5.200a6 6 0 0 1 5 7.600 6 6 0 0 1-5-7.600z" fill={sel ? '#bd7f62' : '#3e6a96'} />
  </svg>
);
const Tri = ({ open }: { open?: boolean }) =>
  open ? (
    <div className="w-0 h-0 border-l-[5px] border-r-[5px] border-t-[7px] border-l-transparent border-r-transparent border-t-[#3c3c38]" />
  ) : (
    <div className="w-0 h-0 border-t-[5px] border-b-[5px] border-l-[7px] border-t-transparent border-b-transparent border-l-[#3c3c38]" />
  );

type Row = { t: string; ic: 'b' | 'c' | 'cl' | 'bl'; dim?: boolean; sel?: boolean; bold?: boolean; open?: boolean; child?: boolean };
const rows: Row[] = [
  { t: 'Body', ic: 'b', dim: true },
  { t: 'Body002', ic: 'b', dim: true },
  { t: 'Cut001', ic: 'c', dim: true },
  { t: 'Body004', ic: 'b', dim: true },
  { t: 'Cut002', ic: 'c', dim: true },
  { t: 'Cut003', ic: 'c', dim: true, open: true },
  { t: 'Clone006', ic: 'cl', dim: true, child: true },
  { t: 'Body006', ic: 'cl', dim: true, child: true },
  { t: 'Body007', ic: 'b', dim: true },
  { t: 'A1_cut', ic: 'bl', sel: true },
  ...['A2', 'A3', 'A4', 'B1', 'B2', 'B3', 'B4', 'C1', 'C2', 'C3', 'C4', 'D1', 'D2', 'D3'].map((k) => ({ t: k + '_cut', ic: 'bl' as const })),
  { t: 'D4_cut', ic: 'bl', bold: true },
];

const TreeRow = ({ r, i }: { r: Row; i: number }) => (
  <div className={`h-[19px] flex items-center relative ${r.sel ? 'bg-[#9d9e99] w-[153px] -ml-[1px] pl-[1px]' : ''}`}>
    {i === 0 && <div className="absolute left-[39px] top-0 w-[114px] h-[19px] bg-[#acacc0]" />}
    <div className="w-[35px] shrink-0 relative flex justify-end">
      {!r.child && <Tri open={r.open} />}
    </div>
    <div className={`${r.child ? 'ml-[26px]' : 'ml-[6px]'} w-[18px] shrink-0 relative`}>
      {r.ic === 'b' && <BodyIc />}
      {r.ic === 'c' && <CutIc />}
      {r.ic === 'cl' && <CloneIc />}
      {r.ic === 'bl' && <BoolIc sel={r.sel} />}
    </div>
    <span className={`ml-[5px] relative text-[15px] ${r.dim ? 'text-[#7d7e7b]' : 'text-[#3a3a37]'} ${r.bold ? 'font-bold' : ''}`}>{r.t}</span>
  </div>
);

const PropRow = ({ a, b, tri, light }: { a: string; b: string; tri?: boolean; light?: boolean }) => (
  <div className="h-[22px] flex border-b border-[#bcbdb8]">
    <div className={`w-[21px] shrink-0 flex items-center justify-center pl-[3px] ${light ? 'bg-[#adaea9]' : 'bg-[#a1a29d]'}`}>
      {tri && <Tri />}
    </div>
    <div className="w-[79px] shrink-0 bg-[#a1a29d] border-r border-[#bcbdb8] pl-[3px] flex items-center text-[15px] text-[#3c3c38] whitespace-pre">{a}</div>
    <div className={`flex-1 pl-[4px] flex items-center text-[15px] text-[#3c3c38] whitespace-pre overflow-hidden ${light ? 'bg-[#adaea9]' : 'bg-[#a4a5a0]'}`}>{b}</div>
  </div>
);
const PropGroup = ({ t, tall }: { t: string; tall?: boolean }) => (
  <div className={`${tall ? 'h-[23px]' : 'h-[22px]'} bg-[#8c8d89] flex items-center pl-[24px] text-[15px] font-bold text-[#b1b2ad]`}>{t}</div>
);

const LeftPanel = () => (
  <div className="w-[480px] shrink-0 bg-[#a9aaa5] flex flex-col pl-[2px] pr-[7px] text-[#3c3c38]">
    <div className="h-[25px] shrink-0 flex items-center text-[15px] relative">
      Combo View
      <svg width="14" height="14" viewBox="0 0 14 14" className="absolute right-[0px] top-[5px]"><rect x="1" y="1" width="11" height="11" rx="1" fill="none" stroke="#44443f" /><path d="M4 4l6 6M10 4l-6 6" stroke="#44443f" strokeWidth="1.600" /></svg>
      <svg width="14" height="14" viewBox="0 0 14 14" className="absolute right-[17px] top-[5px]"><rect x="1" y="1" width="11" height="11" rx="1" fill="none" stroke="#44443f" /><rect x="5" y="3" width="5" height="5" fill="none" stroke="#44443f" /><rect x="3" y="6" width="5" height="5" fill="#a9aaa5" stroke="#44443f" /></svg>
    </div>
    <div className="h-[30px] shrink-0 flex items-end text-[15px] -mb-px relative">
      <div className="w-[57px] h-[30px] rounded-t-[3px] border border-b-0 border-[#8f908b] bg-[#a9aaa5] flex items-center justify-center pb-[1px]">Model</div>
      <div className="w-[51px] h-[28px] rounded-t-[3px] border border-b-0 border-[#8f908b] bg-[#a2a39e] flex items-center justify-center">Tasks</div>
    </div>
    <div className="h-[678px] shrink-0 border border-[#8f908b] rounded-[2px] flex flex-col mt-[1px] overflow-hidden">
      <div className="h-[25px] shrink-0 bg-[#a2a39e] flex border-b-0 pt-[1px]">
        <div className="w-[153px] h-[24px] border border-[#8a8b87] border-l-0 border-t-0 pl-[3px] pt-[1px] flex items-center text-[15px] bg-[#a5a6a1]">Labels &amp; Attributes</div>
      </div>
      <div className="flex-1 bg-[#acada8] pt-[1px] pl-[1px]">
        <div className="h-[19px] flex items-center pl-[2px] text-[15px]">Application</div>
        <div className="h-[19px] flex items-center">
          <div className="w-[12px] ml-[6px] shrink-0 flex justify-center"><Tri open /></div>
          <div className="ml-[5px] w-[16px] h-[19px] border border-[#8b8c88] rounded-[2px] bg-[#b8b8b4] relative overflow-hidden">
            <div className="absolute left-[4px] top-[2px] w-[7px] h-[7px] rounded-full bg-[#8e2020]" />
            <div className="absolute left-[2px] top-[7px] w-[10px] h-[10px] rounded-[2px] bg-[#3f6d9e]" />
          </div>
          <span className="ml-[5px] text-[15px] font-bold text-[#2c2c2a]">Unnamed1</span>
        </div>
        {rows.map((r, i) => (
          <TreeRow key={r.t} r={r} i={i} />
        ))}
      </div>
    </div>
    <div className="h-[9px] shrink-0 flex items-center justify-center gap-[2px]">
      <div className="w-px h-[4px] bg-[#84857f]" /><div className="w-px h-[4px] bg-[#84857f]" /><div className="w-px h-[4px] bg-[#84857f]" />
    </div>
    <div className="h-[146px] shrink-0 mr-[1px] border border-[#8f908b] rounded-[2px] p-[1px] flex gap-[1px] overflow-hidden">
      <div className="w-[452px] shrink-0 overflow-hidden">
        <div className="h-[24px] flex text-[15px] bg-linear-to-b from-[#a9aaa5] to-[#9e9f9a] border-b border-[#85867f]">
          <div className="w-[100px] pl-[5px] border-r border-[#8f908b] flex items-center">Property</div>
          <div className="pl-[5px] flex items-center">Value</div>
        </div>
        <PropGroup t="Base" tall />
        <PropRow a="Shapes" b="[map, A1]" />
        <PropRow a="Placement" tri light b="[(0,00 0,00 1,00); 0,00 °; (0,00 mm  0,00 mm  0,00 ..." />
        <PropRow a="Label" b="A1_cut" />
        <PropGroup t="Boolean" />
        <PropRow a="Refine" b="false" light />
      </div>
      <div className="w-[13px] shrink-0 rounded-[6px] border border-[#8f908b] bg-[#a2a39e] flex flex-col items-center relative">
        <div className="absolute top-[10px] left-0 w-full h-[103px] rounded-[6px] border border-[#85867f] bg-[#a9aaa5]" />
        <div className="absolute top-[54px] left-[3px] w-[6px] flex flex-col gap-[1px]">
          <div className="h-px bg-[#7f807b]" /><div className="h-px bg-[#7f807b]" /><div className="h-px bg-[#7f807b]" />
        </div>
        <div className="absolute top-[3px] w-0 h-0 border-l-[3px] border-r-[3px] border-b-[4px] border-l-transparent border-r-transparent border-b-[#6d6e69]" />
        <div className="absolute bottom-[3px] w-0 h-0 border-l-[4px] border-r-[4px] border-t-[5px] border-l-transparent border-r-transparent border-t-[#55564f]" />
      </div>
    </div>
    <div className="h-[31px] shrink-0 flex items-start text-[15px] -mt-px">
      <div className="w-[49px] h-[27px] mt-[1px] rounded-b-[3px] border border-t-0 border-[#8f908b] bg-[#a2a39e] flex items-center justify-center">View</div>
      <div className="w-[46px] h-[30px] rounded-b-[3px] border border-t-0 border-[#8f908b] bg-[#a9aaa5] flex items-center justify-center pt-[2px]">Data</div>
    </div>
  </div>
);

const hexes: [number, number][] = [
  [1320, 707], [1334, 699], [1306, 715], [1320, 723], [1334, 731], [1306, 731], [1320, 739], [1306, 748], [1320, 755], [1306, 764], [1292, 755], [1292, 723], [1292, 739], [1292, 707], [1341, 715], [1306, 699],
  [1341, 660], [1333, 676], [1300, 643],
];
const hexPts = (x: number, y: number) => {
  const r = 9.2;
  return [0, 60, 120, 180, 240, 300].map((a) => `${(x + r * Math.cos((a * Math.PI) / 180)).toFixed(1)},${(y + r * Math.sin((a * Math.PI) / 180)).toFixed(1)}`).join(' ');
};
const cellsR = [[1248, 381, 94, 94], [1248, 483, 94, 95], [1248, 585, 94, 95], [1248, 688, 94, 94]];

const Model = () => (
  <svg width="422" height="422" viewBox="930 371 422 422" className="absolute left-[401px] top-[211px]">
    <defs>
      <clipPath id="cell3"><rect x="1248" y="585" width="94" height="95" rx="3" /></clipPath>
      <clipPath id="cell4"><rect x="1248" y="688" width="94" height="94" rx="3" /></clipPath>
    </defs>
    <rect x="931" y="372" width="420" height="420" fill="#8f908c" stroke="#1c1c1c" strokeWidth="1.400" />
    {[1039, 1141, 1243].map((x) => <path key={x} d={`M${x} 372V792`} stroke="#1c1c1c" strokeWidth="1.200" />)}
    {[478, 581, 684].map((y) => <path key={y} d={`M931 ${y}H1351`} stroke="#1c1c1c" strokeWidth="1.200" />)}
    {[[939, 95], [1042, 96], [1144, 95]].map(([x, w]) =>
      [381, 483, 585, 688].map((y) => <rect key={`${x}-${y}`} x={x} y={y} width={w} height={94.5} rx="3" fill="#7a7b7e" stroke="#141414" strokeWidth="1.800" />),
    )}
    {cellsR.map(([x, y, w, h]) => <rect key={y} x={x} y={y} width={w} height={h} rx="3" fill="#7a7b7e" stroke="#141414" strokeWidth="1.800" />)}
    <g clipPath="url(#cell4)">
      {hexes.slice(0, 16).map(([x, y], i) => <polygon key={i} points={hexPts(x, y)} fill="none" stroke="#5b5c5e" strokeWidth="1.300" />)}
    </g>
    <g clipPath="url(#cell3)">
      {hexes.slice(16).map(([x, y], i) => <polygon key={i} points={hexPts(x, y)} fill="none" stroke="#5b5c5e" strokeWidth="1.300" />)}
    </g>
    {cellsR.map(([x, y, w, h]) => <rect key={`o${y}`} x={x} y={y} width={w} height={h} rx="3" fill="none" stroke="#141414" strokeWidth="1.800" />)}
  </svg>
);

const Axis = () => (
  <svg width="62" height="60" viewBox="0 0 62 60" className="absolute left-[1320px] top-[800px]">
    <path d="M27 42V12" stroke="#1f5c1f" strokeWidth="2" />
    <path d="M27 11l-4 11h8z" fill="#1f5c1f" />
    <path d="M27 42h30" stroke="#6e1c1c" strokeWidth="2" />
    <path d="M49 38v8l9-4z" fill="#6e1c1c" />
    <path d="M27 38l4 4-4 4-4-4z" fill="#1a1a6e" />
    <text x="32" y="14" fontSize="10" fill="#1c1c1c">Y</text>
    <text x="31" y="40" fontSize="10" fill="#1c1c1c">Z</text>
    <text x="54" y="40" fontSize="10" fill="#1c1c1c">X</text>
  </svg>
);

const Folder = ({ s = 24, id }: { s?: number; id: string }) => (
  <svg width={s} height={s} viewBox="0 0 24 24" className="block shrink-0">
    <defs>
      <linearGradient id={id} x1="0" y1="0" x2="0" y2="1">
        <stop offset="0" stopColor="#f2a46a" />
        <stop offset="1" stopColor="#c4480e" />
      </linearGradient>
    </defs>
    <path d="M1 1h8l2 2h12v5H1z" fill="#eeede8" stroke="#b0afa8" strokeWidth=".7" />
    <path d="M1 6h22v17H1z" fill={`url(#${id})`} stroke="#8f4a22" strokeWidth=".7" />
  </svg>
);

const places = ['Desktop', 'Documents', 'chihauccisoilconte', 'Music', 'Pictures', 'Videos', 'video_tutorial'];
const U = ({ c }: { c: string }) => <span className="underline underline-offset-2">{c}</span>;

const Dialog = () => (
  <div className="absolute left-[670px] top-[328px] w-[629px] h-[451px] rounded-t-[6px] bg-[#f1f1ee] flex flex-col text-[#4a4a46] text-[15px] shadow-[0_2px_14px_rgba(0,0,0,0.45)]">
    <div className="h-[30px] shrink-0 rounded-t-[6px] bg-linear-to-b from-[#57574c] to-[#3f3f38] flex items-center justify-center relative pb-[1px]">
      <span className="font-bold text-[16px] text-[#d9d9d2]">Export file</span>
      <div className="absolute right-[6px] top-[6px] w-[17px] h-[17px] rounded-full bg-[#dc6231] flex items-center justify-center">
        <svg width="8" height="8" viewBox="0 0 8 8"><path d="M1 1l6 6M7 1l-6 6" stroke="#5b2a14" strokeWidth="1.300" /></svg>
      </div>
    </div>
    <div className="h-[44px] shrink-0 flex items-center pl-[11px] pt-[4px] relative">
      <span className="w-[92px]">Look in:</span>
      <div className="w-[315px] h-[24px] rounded-[4px] border border-[#bdbdb8] bg-linear-to-b from-[#fbfbfa] to-[#f0f0ee] flex items-center pl-[5px] relative shrink-0">
        <Folder s={16} id="fc" />
        <span className="ml-[2px] whitespace-pre">/home/chihauccisoi...video_tutorial/STL</span>
        <svg width="8" height="16" viewBox="0 0 8 16" className="absolute right-[5px] top-[4px]"><path d="M1 6l3-4 3 4zM1 10l3 4 3-4z" fill="#4a4a46" /></svg>
      </div>
      <div className="w-[34px] shrink-0 ml-[4px] flex justify-center">
        <svg width="14" height="20" viewBox="0 0 14 20"><path d="M11 1L3 10l8 9" fill="none" stroke="#c8602a" strokeWidth="3.600" /></svg>
      </div>
      <div className="w-[32px] shrink-0 flex justify-center">
        <svg width="14" height="20" viewBox="0 0 14 20"><path d="M3 1l8 9-8 9" fill="none" stroke="#a6a6a2" strokeWidth="3.600" /></svg>
      </div>
      <div className="w-[33px] shrink-0 flex justify-center">
        <svg width="18" height="14" viewBox="0 0 18 14"><path d="M1 12l8-9 8 9" fill="none" stroke="#d9662c" strokeWidth="3.600" /></svg>
      </div>
      <div className="w-[34px] shrink-0 flex justify-center">
        <svg width="18" height="18" viewBox="0 0 24 24"><path d="M2 2h8l2 3h10v18H2z" fill="#e88a4c" stroke="#a8a69c" /><path d="M2 2h8l2 3H2z" fill="#e6e5e0" /><path d="M16 13v3h-3v4h3v3h4v-3h3v-4h-3v-3z" fill="#6f9a2c" stroke="#3f6212" strokeWidth=".5" /></svg>
      </div>
      <div className="w-[25px] h-[24px] ml-[5px] shrink-0 rounded-[4px] border border-[#9d9d98] bg-[#e4e4e1] flex items-center justify-center">
        <svg width="15" height="15" viewBox="0 0 15 15"><rect x=".7" y=".7" width="13.600" height="13.600" rx="1.600" fill="#fff" stroke="#14202c" strokeWidth="1.300" /><path d="M4 4h3v3H4zM8.400 4h3v3h-3zM4 8.400h3v3H4zM8.400 8.400h3v3h-3z" fill="#14202c" /></svg>
      </div>
      <div className="w-[40px] shrink-0 flex justify-center -mt-[2px] -ml-[2px]">
        <svg width="15" height="17" viewBox="0 0 15 17"><rect x=".7" y=".7" width="13.600" height="15.600" rx="1.600" fill="#fff" stroke="#14202c" strokeWidth="1.300" /><path d="M4 4h7M4 6.700h7M4 9.400h7M4 12h7" stroke="#14202c" strokeWidth="1.200" /></svg>
      </div>
    </div>
    <div className="h-[300px] shrink-0 flex pl-[11px] pr-[11px]">
      <div className="w-[196px] shrink-0 bg-white border border-[#c3c3be] pl-[3px]">
        {places.map((p, i) => (
          <div key={p} className="h-[26px] flex items-center">
            <Folder id={`f${i}`} />
            <span className="ml-[6px]">{p}</span>
          </div>
        ))}
      </div>
      <div className="w-[6px] shrink-0" />
      <div className="flex-1 bg-white border border-[#c3c3be]" />
    </div>
    <div className="h-[41px] shrink-0 flex items-start pl-[11px] pr-[12px] pt-[7px]">
      <span className="w-[92px] h-[25px] flex items-center shrink-0"><span>File <U c="n" />ame:</span></span>
      <div className="w-[423px] h-[25px] shrink-0 rounded-[3px] border border-[#d4683a] bg-white flex items-center pl-[3px] relative">
        A1<span className="w-px h-[16px] bg-[#333] ml-[1px]" />
        <svg width="12" height="18" viewBox="0 0 12 18" className="absolute left-[147px] top-[5px]"><path d="M2 1.500h2.500L6 3l1.500-1.500H10M6 3v12M2 16.500h2.500L6 15l1.500 1.500H10" fill="none" stroke="#fff" strokeWidth="3" /><path d="M2 1.500h2.500L6 3l1.500-1.500H10M6 3v12M2 16.500h2.500L6 15l1.500 1.500H10" fill="none" stroke="#111" strokeWidth="1.300" /></svg>
      </div>
      <div className="w-[82px] h-[25px] ml-[9px] shrink-0 rounded-[3px] border border-[#c96f45] bg-linear-to-b from-[#f0966e] to-[#f08a5e] flex items-center justify-center text-[#5a3a2a]"><span><U c="S" />ave</span></div>
    </div>
    <div className="h-[36px] shrink-0 flex items-start pl-[11px] pr-[12px]">
      <span className="w-[92px] h-[23px] flex items-center shrink-0">Files of type:</span>
      <div className="w-[423px] h-[24px] pb-[1px] shrink-0 rounded-[3px] border border-[#bdbdb8] bg-linear-to-b from-[#fbfbfa] to-[#efefed] flex items-center pl-[4px] relative">
        STL Mesh (*.stl *.ast)
        <svg width="8" height="16" viewBox="0 0 8 16" className="absolute right-[5px] top-[4px]"><path d="M1 6l3-4 3 4zM1 10l3 4 3-4z" fill="#4a4a46" /></svg>
      </div>
      <div className="w-[82px] h-[24px] pb-[1px] ml-[9px] shrink-0 rounded-[3px] border border-[#bdbdb8] bg-linear-to-b from-[#fbfbfa] to-[#efefed] flex items-center justify-center"><span>C<U c="a" />ncel</span></div>
    </div>
  </div>
);

export default function App() {
  return (
    <div className="w-[1920px] h-[1080px] relative overflow-hidden flex flex-col bg-[#a9aaa5] [font-family:Lato,sans-serif]">
      <Defs />
      <TopBar />
      <div className="flex flex-1 min-h-0">
        <Dock />
        <div className="flex-1 min-w-0 flex flex-col">
          <div className="h-[28px] shrink-0 bg-linear-to-b from-[#343430] to-[#2d2d28] flex items-center relative text-[15px] font-bold text-[#aaaaa3] pb-[1px]">
            <span className="absolute left-[899px] w-[72px] text-center">FreeCAD</span>
            <div className="ml-auto flex gap-[4px] pr-[5px]">
              <div className="w-[16px] h-[16px] rounded-full bg-[#555550] flex items-center justify-center"><div className="w-[8px] h-[2px] bg-[#3a3a36]" /></div>
              <div className="w-[16px] h-[16px] rounded-full bg-[#555550] flex items-center justify-center"><div className="w-[8px] h-[7px] border border-[#2f2f2b]" /></div>
              <div className="w-[16px] h-[16px] rounded-full bg-[#b84f28] flex items-center justify-center">
                <svg width="8" height="8" viewBox="0 0 8 8"><path d="M1 1l6 6M7 1l-6 6" stroke="#4d2412" strokeWidth="1.200" /></svg>
              </div>
            </div>
          </div>
          <div className="h-[25px] shrink-0 bg-[#2e2e29] flex items-center pl-[13px] text-[15px] text-[#a3a39c]">
            {menus.map(([u, r, w]) => (
              <span key={u + r} className={w}><U c={u} />{r}</span>
            ))}
          </div>
          <Toolbars />
          <div className="flex flex-1 min-h-0">
            <LeftPanel />
            <div className="flex-1 min-w-0 flex flex-col">
              <div className="h-[887px] shrink-0 bg-linear-to-b from-[#22224a] to-[#6a6a74] relative overflow-hidden">
                <Model />
                <Axis />
              </div>
              <div className="flex-1 bg-[#a9aaa5] border-t border-[#8f908b]">
                <div className="w-[163px] h-[32px] border-r border-b border-[#8f908b] rounded-br-[3px] flex items-center pl-[6px] text-[15px] text-[#4a4a46]">
                  <svg width="18" height="20" viewBox="0 0 18 20"><path d="M1 1h8v3H4v14H1z" fill="#a31818" /><Gear x={10} y={12} r={5} /></svg>
                  <span className="ml-[6px]">Unnamed1 : 1*</span>
                  <svg width="13" height="13" viewBox="0 0 13 13" className="ml-[10px]"><path d="M2 2l9 9M11 2l-9 9" stroke="#3f3f3c" strokeWidth="3.400" /></svg>
                </div>
              </div>
            </div>
          </div>
        </div>
      </div>
      <Dialog />
    </div>
  );
}
